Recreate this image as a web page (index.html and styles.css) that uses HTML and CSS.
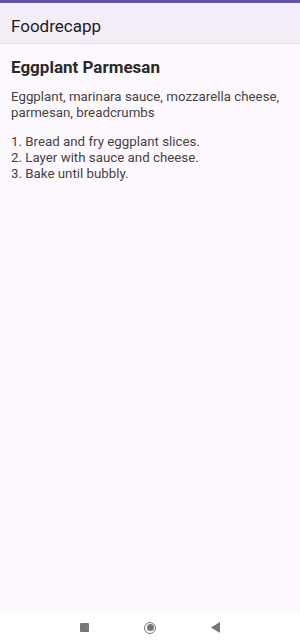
FILE: index.html
```html
<!DOCTYPE html>
<html>
<head>
<meta charset="utf-8">
<link rel="stylesheet" href="styles.css">
</head>
<body>
<div class="screen">
  <div class="status"></div>
  <header class="appbar">Foodrecapp</header>
  <main class="content">
    <h1 class="title">Eggplant Parmesan</h1>
    <p class="ingredients">Eggplant, marinara sauce, mozzarella cheese, parmesan, breadcrumbs</p>
    <p class="steps">1. Bread and fry eggplant slices.<br>2. Layer with sauce and cheese.<br>3. Bake until bubbly.</p>
  </main>
  <nav class="navbar">
    <span class="nav-square"></span>
    <span class="nav-circle"><span class="nav-dot"></span></span>
    <svg class="nav-back" width="9" height="11" viewBox="0 0 9 11"><path d="M9 0 L9 11 L0 5.5 Z" fill="#777"/></svg>
  </nav>
</div>
</body>
</html>
```
FILE: styles.css
```css
html, body { margin: 0; padding: 0; }
body { font-family: Roboto, "Noto Sans", sans-serif; background: #fdf8fd; }
.screen { width: 300px; height: 643px; display: flex; flex-direction: column; background: #fdf8fd; }
.status { height: 3px; background: #6750a4; }
.appbar { height: 41px; box-sizing: border-box; background: #f3edf7; border-bottom: 1px solid #e6e0e9; color: #1d1b20; font-size: 17px; padding: 13px 0 0 11px; }
.content { flex: 1; padding: 12px 11px 0 11px; color: #1d1b20; }
.title { margin: 0; font-size: 17px; font-weight: 700; line-height: 22px; color: #2a2a2a; }
.ingredients { margin: 11px 0 0 0; font-size: 13.3px; line-height: 16px; color: #444; }
.steps { margin: 13px 0 0 0; font-size: 13.3px; line-height: 16px; color: #444; }
.navbar { height: 31px; background: #ffffff; display: flex; align-items: center; justify-content: center; }
.nav-square { width: 9px; height: 9px; background: #777; border-radius: 1px; margin-right: 55px; }
.nav-circle { width: 10px; height: 10px; border: 1.5px solid #777; border-radius: 50%; display: flex; align-items: center; justify-content: center; margin-right: 55px; }
.nav-dot { width: 7px; height: 7px; background: #777; border-radius: 50%; }
.nav-back { display: block; }
```
